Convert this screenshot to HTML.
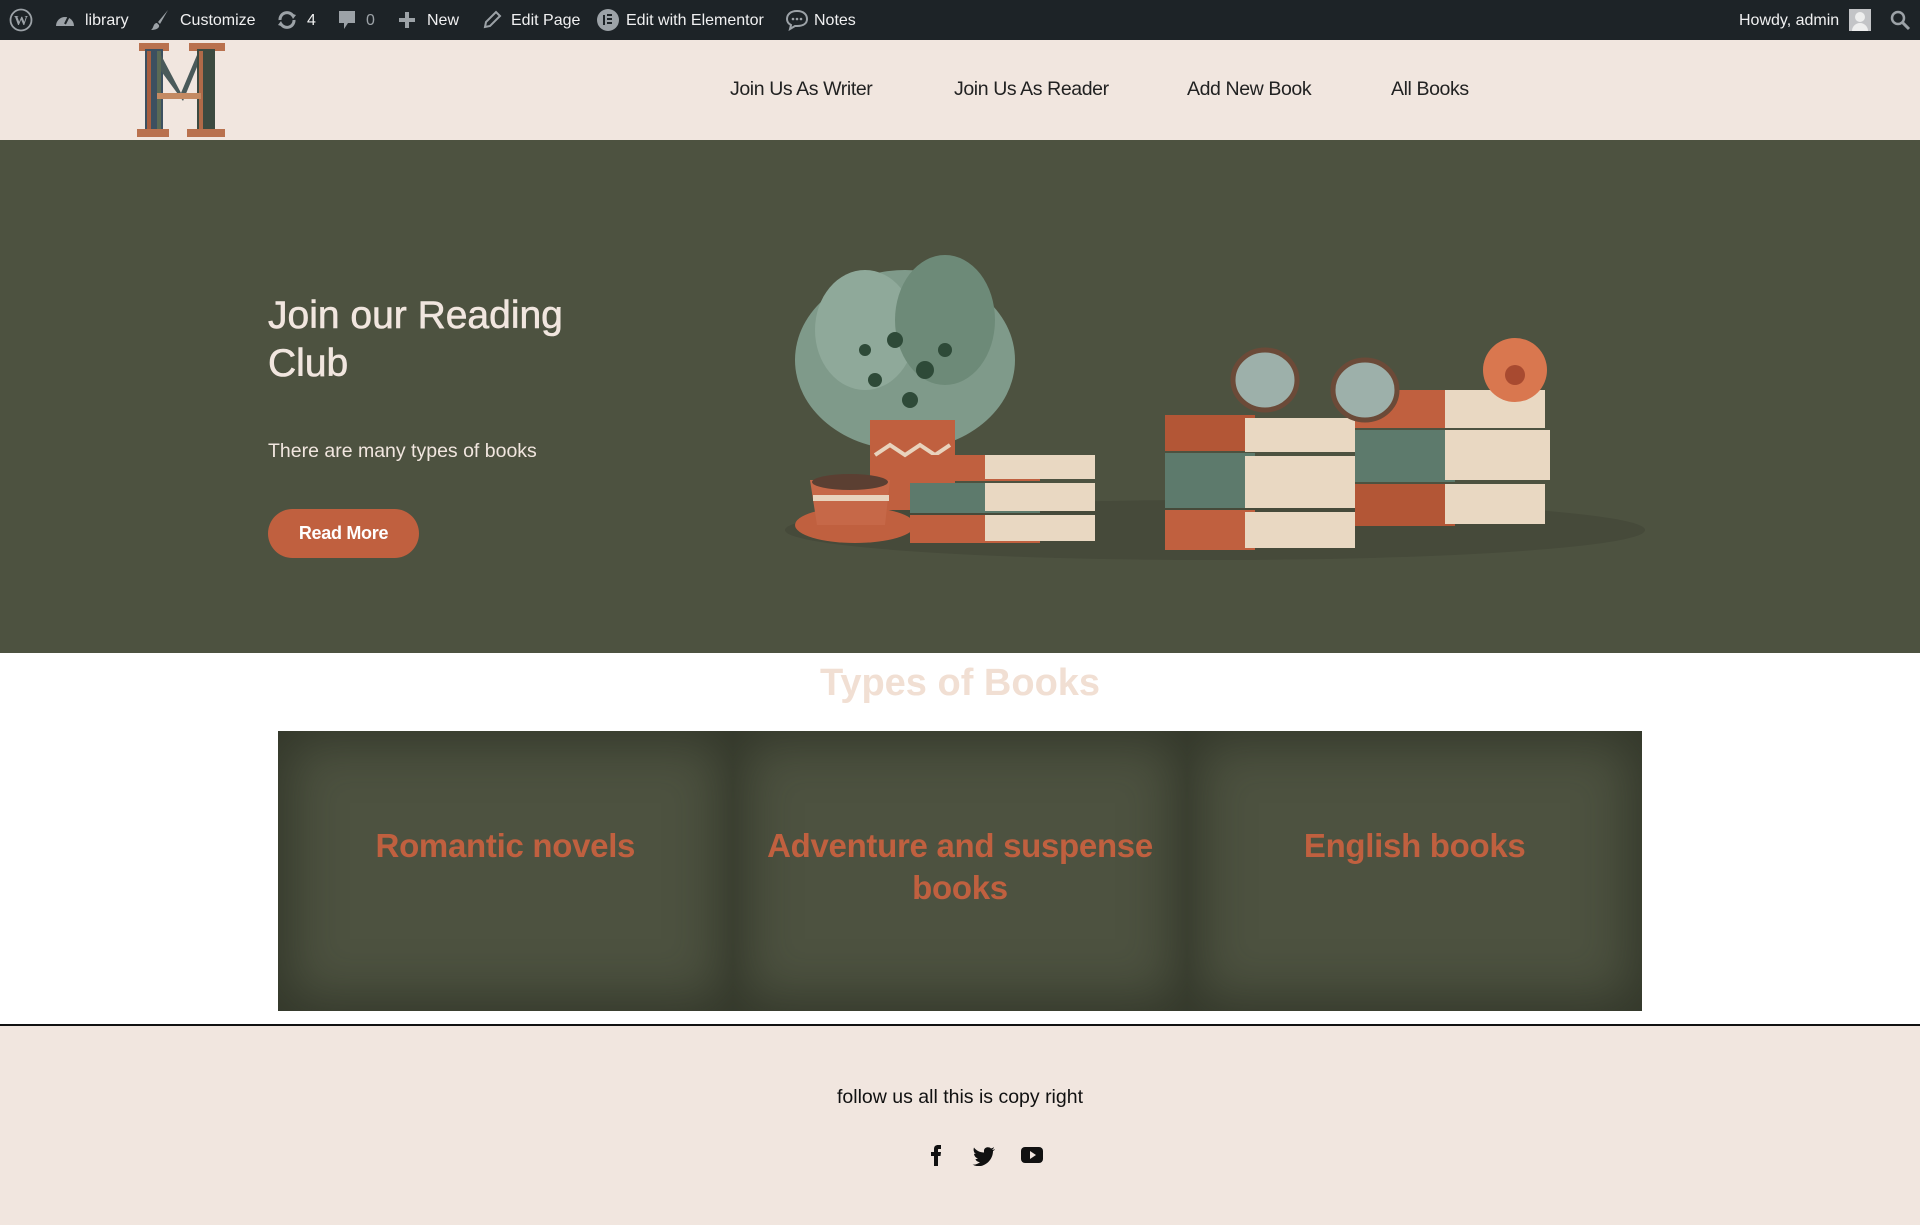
<!DOCTYPE html>
<html><head><meta charset="utf-8">
<style>
*{margin:0;padding:0;box-sizing:border-box}
body{width:1920px;height:1225px;overflow:hidden;background:#fff;font-family:"Liberation Sans",sans-serif;position:relative}
.ab{position:absolute;left:0;top:0;width:1920px;height:40px;background:#1d2327;color:#f0f0f1;font-size:16px}
.ab span{position:absolute;top:12px;white-space:nowrap}
.ab svg{position:absolute}
.hd{position:absolute;left:0;top:40px;width:1920px;height:100px;background:#f1e6df}
.nav{position:absolute;top:38px;font-size:19.5px;color:#222;font-weight:300;letter-spacing:-0.4px}
.hero{position:absolute;left:0;top:140px;width:1920px;height:513px;background:#4d5240}
h1{position:absolute;left:268px;top:152px;font-size:39px;line-height:48px;color:#f1e6df;font-weight:normal;-webkit-text-stroke:0.6px #f1e6df}
.p{position:absolute;left:268px;top:300px;font-size:19.5px;color:#f1e6df}
.btn{position:absolute;left:268px;top:369px;width:151px;height:49px;border-radius:25px;background:#c0603f;color:#fff;font-weight:bold;font-size:18px;text-align:center;line-height:49px;letter-spacing:-0.3px}
.tt{position:absolute;left:0;width:1920px;top:662px;text-align:center;font-size:38px;font-weight:bold;color:#f1dfd3}
.cards{position:absolute;left:278px;top:731px;width:1364px;height:280px;display:flex}
.card{flex:1;background:#4d5240;box-shadow:inset 0 0 50px 12px rgba(30,32,24,.55);text-align:center;color:#c0603f;font-size:33px;font-weight:bold;padding-top:94px;line-height:42px;padding-left:20px;padding-right:20px;letter-spacing:-0.3px}
.line{position:absolute;left:0;top:1024px;width:1920px;height:2px;background:#111}
.ft{position:absolute;left:0;top:1026px;width:1920px;height:199px;background:#f1e6df}
.ftx{position:absolute;left:0;width:1920px;text-align:center;font-size:19.5px;color:#111}
</style></head><body>
<div class="ab">
<svg style="left:9px;top:8px" width="24" height="24" viewBox="0 0 24 24"><circle cx="12" cy="12" r="10.5" fill="none" stroke="#9ca2a7" stroke-width="1.8"/><text x="12" y="17" font-size="14" font-weight="bold" text-anchor="middle" fill="#9ca2a7" font-family="Liberation Serif">W</text></svg>
<svg style="left:54px;top:10px" width="22" height="20" viewBox="0 0 22 20"><path d="M2 16 A9 9 0 1 1 20 16 Z" fill="#9ca2a7"/><path d="M11 14 L15 6" stroke="#1d2327" stroke-width="2"/></svg>
<span style="left:85px">library</span>
<svg style="left:150px;top:9px" width="20" height="22" viewBox="0 0 20 22"><path d="M18 1 L8 13 L10 15 Z" fill="#9ca2a7"/><path d="M7 14 C3 14 4 19 1 21 C6 21 10 19 9 16 Z" fill="#9ca2a7"/></svg>
<span style="left:180px">Customize</span>
<svg style="left:276px;top:10px" width="22" height="20" viewBox="0 0 22 20"><path d="M4 10 A7 7 0 0 1 17 6 M18 10 A7 7 0 0 1 5 14" stroke="#9ca2a7" stroke-width="3" fill="none"/><path d="M14 3 L20 5 L17 9Z M8 17 L2 15 L5 11Z" fill="#9ca2a7"/></svg>
<span style="left:307px">4</span>
<svg style="left:338px;top:10px" width="18" height="22" viewBox="0 0 18 22"><path d="M1 1 H17 V13 H10 L6 19 V13 H1Z" fill="#9ca2a7"/></svg>
<span style="left:366px;color:#9ca2a7">0</span>
<svg style="left:398px;top:11px" width="18" height="18"><path d="M9 1 V17 M1 9 H17" stroke="#9ca2a7" stroke-width="4"/></svg>
<span style="left:427px">New</span>
<svg style="left:482px;top:10px" width="20" height="20"><path d="M3 17 L4 12 L14 2 L18 6 L8 16 Z" fill="none" stroke="#9ca2a7" stroke-width="2"/></svg>
<span style="left:511px">Edit Page</span>
<svg style="left:596px;top:8px" width="24" height="24"><circle cx="12" cy="12" r="11" fill="#9ca2a7"/><path d="M8 7 V17 M11 7 H16 M11 11 H16 M11 15 H16" stroke="#1d2327" stroke-width="2"/></svg>
<span style="left:626px">Edit with Elementor</span>
<svg style="left:785px;top:9px" width="24" height="22"><path d="M12 2 C5 2 2 6 2 10 C2 13 4 15 6 16 L5 20 L10 17 C11 17 12 17 12 17 C19 17 22 14 22 10 C22 6 19 2 12 2Z" fill="none" stroke="#9ca2a7" stroke-width="2"/><circle cx="8" cy="10" r="1.3" fill="#9ca2a7"/><circle cx="12" cy="10" r="1.3" fill="#9ca2a7"/><circle cx="16" cy="10" r="1.3" fill="#9ca2a7"/></svg>
<span style="left:814px">Notes</span>
<span style="left:1739px">Howdy, admin</span>
<div style="position:absolute;left:1849px;top:9px;width:22px;height:22px;background:#c3c4c7"><div style="position:absolute;left:6px;top:3px;width:10px;height:10px;border-radius:50%;background:#eee"></div><div style="position:absolute;left:3px;top:14px;width:16px;height:8px;border-radius:8px 8px 0 0;background:#eee"></div></div>
<svg style="left:1890px;top:10px" width="22" height="22"><circle cx="8" cy="8" r="6" fill="none" stroke="#9ca2a7" stroke-width="2.5"/><path d="M12 12 L19 19" stroke="#9ca2a7" stroke-width="3"/></svg>
</div>
<div class="hd">
<svg style="position:absolute;left:137px;top:3px" width="92" height="95" viewBox="0 0 92 95">
<rect x="2" y="0" width="30" height="8" fill="#b9714e"/><rect x="52" y="0" width="36" height="8" fill="#b9714e"/>
<rect x="8" y="6" width="18" height="82" fill="#3c5060"/><rect x="10" y="8" width="4" height="78" fill="#a85d3e"/><rect x="20" y="8" width="4" height="78" fill="#5a6a55"/>
<rect x="60" y="6" width="18" height="82" fill="#3c4a40"/><rect x="62" y="8" width="4" height="78" fill="#b06a48"/>
<path d="M24 12 L44 50 L60 12 L60 24 L46 58 L24 28Z" fill="#4a5a5a"/><rect x="20" y="50" width="44" height="6" fill="#c48a62"/>
<rect x="0" y="86" width="32" height="8" fill="#b9714e"/><rect x="50" y="86" width="38" height="8" fill="#b9714e"/>
</svg>
<div class="nav" style="left:730px">Join Us As Writer</div>
<div class="nav" style="left:954px">Join Us As Reader</div>
<div class="nav" style="left:1187px">Add New Book</div>
<div class="nav" style="left:1391px">All Books</div>
</div>
<div class="hero">
<h1>Join our Reading<br>Club</h1>
<div class="p">There are many types of books</div>
<div class="btn">Read More</div>
<svg style="position:absolute;left:775px;top:100px" width="880" height="330" viewBox="0 0 880 330">
<ellipse cx="440" cy="290" rx="430" ry="30" fill="#464a3a"/>
<g fill="#7f9a8a"><ellipse cx="130" cy="120" rx="110" ry="90"/><ellipse cx="90" cy="90" rx="50" ry="60" fill="#8fa99a"/><ellipse cx="170" cy="80" rx="50" ry="65" fill="#6d8a78"/></g>
<g fill="#2e4a38"><circle cx="120" cy="100" r="8"/><circle cx="150" cy="130" r="9"/><circle cx="100" cy="140" r="7"/><circle cx="170" cy="110" r="7"/><circle cx="135" cy="160" r="8"/><circle cx="90" cy="110" r="6"/></g>
<rect x="95" y="180" width="85" height="90" fill="#c0603f"/><path d="M100 215 L115 205 L130 215 L145 205 L160 215 L175 205" stroke="#e8d3bd" stroke-width="4" fill="none"/>
<ellipse cx="80" cy="285" rx="60" ry="18" fill="#c0603f"/><path d="M35 240 H115 L110 285 H42Z" fill="#c66848"/><rect x="38" y="255" width="76" height="6" fill="#e8d3bd"/><ellipse cx="75" cy="242" rx="38" ry="8" fill="#5b3f32"/>
<rect x="135" y="215" width="130" height="26" fill="#c0603f"/><rect x="210" y="215" width="110" height="24" fill="#e9d8c2"/>
<rect x="135" y="243" width="130" height="30" fill="#5d7a6c"/><rect x="210" y="243" width="110" height="28" fill="#e9d8c2"/>
<rect x="135" y="275" width="130" height="28" fill="#c0603f"/><rect x="210" y="275" width="110" height="26" fill="#e9d8c2"/>
<rect x="390" y="175" width="90" height="36" fill="#b35636"/><rect x="470" y="178" width="110" height="34" fill="#e9d8c2"/>
<rect x="390" y="213" width="90" height="55" fill="#5d7a6c"/><rect x="470" y="216" width="110" height="52" fill="#e9d8c2"/>
<rect x="390" y="270" width="90" height="40" fill="#c0603f"/><rect x="470" y="272" width="110" height="36" fill="#e9d8c2"/>
<rect x="580" y="150" width="100" height="38" fill="#c0603f"/><rect x="670" y="150" width="100" height="38" fill="#e9d8c2"/>
<rect x="580" y="190" width="100" height="52" fill="#5d7a6c"/><rect x="670" y="190" width="105" height="50" fill="#e9d8c2"/>
<rect x="580" y="244" width="100" height="42" fill="#b35636"/><rect x="670" y="244" width="100" height="40" fill="#e9d8c2"/>
<ellipse cx="490" cy="140" rx="32" ry="30" fill="#9db0aa" stroke="#6b4a38" stroke-width="5"/><ellipse cx="590" cy="150" rx="32" ry="30" fill="#9db0aa" stroke="#6b4a38" stroke-width="5"/>
<circle cx="740" cy="130" r="32" fill="#d9774f"/><circle cx="740" cy="135" r="10" fill="#a84a30"/>
</svg>
</div>
<div class="tt">Types of Books</div>
<div class="cards">
<div class="card">Romantic novels</div>
<div class="card">Adventure and suspense books</div>
<div class="card">English books</div>
</div>
<div class="line"></div>
<div class="ft">
<div class="ftx" style="top:60px">follow us all this is copy right</div>
<svg style="position:absolute;left:926px;top:118px" width="20" height="22"><path d="M8 22 V12 H5 V8 H8 V5 C8 2 10 1 12 1 H15 V5 H12.5 C12 5 12 5.5 12 6 V8 H15 L14.5 12 H12 V22Z" fill="#111"/></svg>
<svg style="position:absolute;left:972px;top:120px" width="24" height="20"><path d="M23 3 C22 3.5 21 4 20 4 C21 3 22 2 22 1 C21 2 20 2 19 2.5 C17 0.5 13 1 12 4 C12 5 12 6 12 6.5 C8 6.5 4 4.5 2 1.5 C1 4 2 7 4 8 C3 8 2.5 8 2 7.5 C2 10 4 12 6 12.5 C5 13 4 13 3.5 13 C4 15 6 16 8 16 C6 18 3 19 0.5 18.5 C3 20 6 20.5 9 20 C17 18 21 11 21 5 C22 4.5 22.5 4 23 3Z" fill="#111"/></svg>
<svg style="position:absolute;left:1021px;top:121px" width="22" height="16"><rect x="0" y="0" width="22" height="16" rx="4" fill="#111"/><path d="M9 4 L15 8 L9 12Z" fill="#f1e6df"/></svg>
</div>
</body></html>
